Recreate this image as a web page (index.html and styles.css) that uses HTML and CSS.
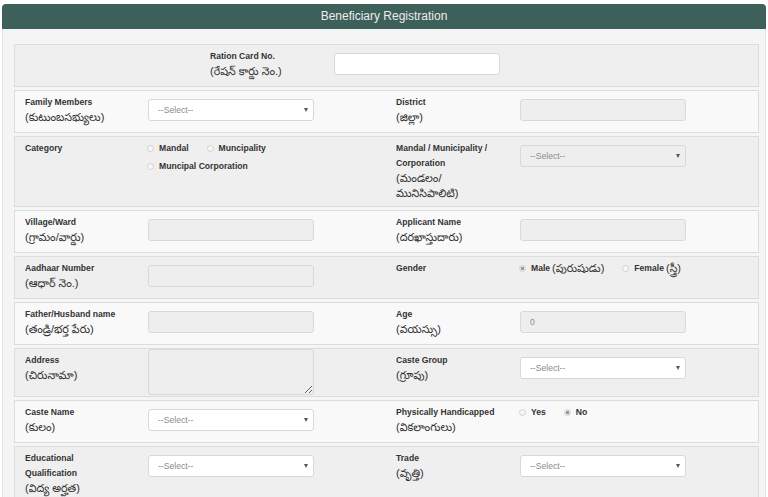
FILE: index.html
```html
<!DOCTYPE html>
<html lang="en">
<head>
<meta charset="utf-8">
<title>Beneficiary Registration</title>
<link rel="stylesheet" href="styles.css">
</head>
<body>
<div class="page">
  <div class="panel-head">Beneficiary Registration</div>
  <div class="panel-body">

    <div class="frow ration alt">
      <div class="lbl">Ration Card No.<span class="te">(రేషన్ కార్డు నెం.)</span></div>
      <div class="fld"><input class="ctl" type="text"></div>
    </div>

    <div class="frow">
      <div class="lbl">Family Members<span class="te">(కుటుంబసభ్యులు)</span></div>
      <div class="fld"><div class="sel"><select class="ctl"><option>--Select--</option></select></div></div>
      <div class="spacer"></div>
      <div class="lbl">District<span class="te">(జిల్లా)</span></div>
      <div class="fld"><input class="ctl" type="text" disabled></div>
    </div>

    <div class="frow alt">
      <div class="lbl">Category</div>
      <div class="fld opts">
        <label class="opt"><span class="rd"></span>Mandal</label>
        <label class="opt"><span class="rd"></span>Muncipality</label>
        <label class="opt"><span class="rd"></span>Muncipal Corporation</label>
      </div>
      <div class="spacer"></div>
      <div class="lbl">Mandal / Municipality / Corporation<span class="te">(మండలం/ మునిసిపాలిటి)</span></div>
      <div class="fld"><div class="sel"><select class="ctl" disabled><option>--Select--</option></select></div></div>
    </div>

    <div class="frow">
      <div class="lbl">Village/Ward<span class="te">(గ్రామం/వార్డు)</span></div>
      <div class="fld"><input class="ctl" type="text" disabled></div>
      <div class="spacer"></div>
      <div class="lbl">Applicant Name<span class="te">(దరఖాస్తుదారు)</span></div>
      <div class="fld"><input class="ctl" type="text" disabled></div>
    </div>

    <div class="frow alt">
      <div class="lbl">Aadhaar Number<span class="te">(ఆధార్ నెం.)</span></div>
      <div class="fld"><input class="ctl" type="text" disabled></div>
      <div class="spacer"></div>
      <div class="lbl">Gender</div>
      <div class="fld opts">
        <label class="opt"><span class="rd on"></span>Male <span class="tn">(పురుషుడు)</span></label>
        <label class="opt"><span class="rd"></span>Female <span class="tn">(స్త్రీ)</span></label>
      </div>
    </div>

    <div class="frow">
      <div class="lbl">Father/Husband name<span class="te">(తండ్రి/భర్త పేరు)</span></div>
      <div class="fld"><input class="ctl" type="text" disabled></div>
      <div class="spacer"></div>
      <div class="lbl">Age<span class="te">(వయస్సు)</span></div>
      <div class="fld"><input class="ctl" type="text" value="0" disabled></div>
    </div>

    <div class="frow alt">
      <div class="lbl">Address<span class="te">(చిరునామా)</span></div>
      <div class="fld ta"><textarea class="ctl area" disabled></textarea></div>
      <div class="spacer"></div>
      <div class="lbl">Caste Group<span class="te">(గ్రూపు)</span></div>
      <div class="fld"><div class="sel"><select class="ctl"><option>--Select--</option></select></div></div>
    </div>

    <div class="frow">
      <div class="lbl">Caste Name<span class="te">(కులం)</span></div>
      <div class="fld"><div class="sel"><select class="ctl"><option>--Select--</option></select></div></div>
      <div class="spacer"></div>
      <div class="lbl">Physically Handicapped<span class="te">(వికలాంగులు)</span></div>
      <div class="fld opts">
        <label class="opt"><span class="rd"></span>Yes</label>
        <label class="opt"><span class="rd on"></span>No</label>
      </div>
    </div>

    <div class="frow alt">
      <div class="lbl">Educational Qualification<span class="te">(విద్య అర్హత)</span></div>
      <div class="fld"><div class="sel"><select class="ctl"><option>--Select--</option></select></div></div>
      <div class="spacer"></div>
      <div class="lbl">Trade<span class="te">(వృత్తి)</span></div>
      <div class="fld"><div class="sel"><select class="ctl"><option>--Select--</option></select></div></div>
    </div>

  </div>
</div>
</body>
</html>
```

FILE: styles.css
```css
* { box-sizing: border-box; }

html, body {
  margin: 0;
  padding: 0;
  background: #ffffff;
  overflow: hidden;
}

body {
  font-family: "Liberation Sans", Arial, "Noto Sans Telugu", "Noto Sans", sans-serif;
  font-size: 8.6px;
  color: #333333;
}

.page {
  padding: 4px 2px 0 2px;
}

.panel-head {
  height: 25px;
  line-height: 25px;
  background: #3e605b;
  color: #ececec;
  text-align: center;
  font-size: 12px;
  border-radius: 4px 4px 0 0;
}

.panel-body {
  background: #f5f5f5;
  border: 1px solid #e4e4e4;
  border-top: 0;
  padding: 15px 6px 0 11px;
  min-height: 480px;
}

.frow {
  display: grid;
  grid-template-columns: 123px 186px 62px 124px 186px 1fr;
  border: 1px solid #dcdcdc;
  background: #f9f9f9;
  padding-top: 4px;
  margin-bottom: 3px;
}

.frow.alt {
  background: #efefef;
}

.frow.ration {
  grid-template-columns: 185px 124px 186px 1fr;
}

.frow.ration .lbl {
  grid-column: 2;
}

.lbl {
  padding: 0 10px 5px 10px;
  font-weight: bold;
  line-height: 15px;
}

.te {
  display: block;
  font-weight: normal;
  font-size: 11px;
  line-height: 15px;
  color: #2e2e2e;
}

.tn {
  font-weight: normal;
  font-size: 11px;
  margin-left: 2px;
}

.fld {
  padding: 4px 10px 11px 10px;
}

.ctl {
  display: block;
  width: 100%;
  height: 22px;
  margin: 0;
  border: 1px solid #d8d8d8;
  border-radius: 3px;
  background: #ffffff;
  font-family: inherit;
  font-size: 8.6px;
  color: #8a8a8a;
  padding: 0 9px;
  outline: none;
}

.ctl:disabled {
  background: #eeeeee;
  color: #8a8a8a;
  opacity: 1;
}

select.ctl {
  -webkit-appearance: none;
  appearance: none;
}

.sel {
  position: relative;
}

.sel::after {
  content: "";
  position: absolute;
  right: 6px;
  top: 9px;
  border-left: 2.5px solid transparent;
  border-right: 2.5px solid transparent;
  border-top: 4px solid #555555;
}

.fld.ta {
  margin-top: -4px;
  padding-top: 0;
  padding-bottom: 1px;
}

.ctl.area {
  height: 46px;
  resize: vertical;
  padding: 4px 9px;
}

.opts {
  display: flex;
  flex-wrap: wrap;
  align-content: flex-start;
  column-gap: 18px;
  row-gap: 3px;
  padding: 0 10px 0 9px;
  line-height: 15px;
}

.opt {
  display: inline-flex;
  align-items: center;
  font-weight: bold;
  color: #333333;
  white-space: nowrap;
}

.rd {
  width: 7px;
  height: 7px;
  border-radius: 50%;
  border: 1px solid #d2d2d2;
  background: #f6f6f6;
  margin-right: 5px;
  flex: none;
}

.rd.on {
  background: radial-gradient(circle, #9a9a9a 0, #9a9a9a 1.4px, #e8e8e8 1.9px);
}
```
